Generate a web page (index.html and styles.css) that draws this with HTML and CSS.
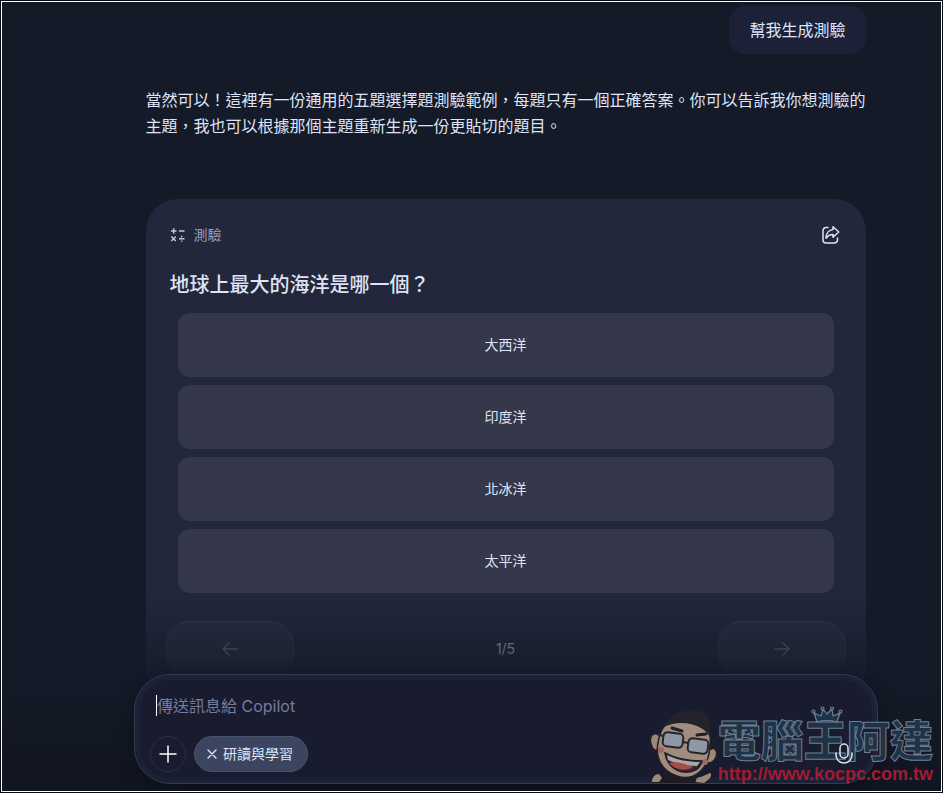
FILE: index.html
```html
<!DOCTYPE html>
<html lang="zh-TW">
<head>
    <meta charset="UTF-8">
    <meta name="viewport" content="width=device-width, initial-scale=1.0">
    <title>Copilot</title>
    <link rel="stylesheet" href="styles.css">
</head>
<body>
    <div class="app">
        <main class="chat">
            <div class="user-message">幫我生成測驗</div>
            <p class="reply">當然可以！這裡有一份通用的五題選擇題測驗範例，每題只有一個正確答案。你可以告訴我你想測驗的主題，我也可以根據那個主題重新生成一份更貼切的題目。</p>

            <section class="quiz">
                <div class="quiz-header">
                    <svg class="quiz-icon" width="16" height="16" viewBox="0 0 16 16" fill="none" stroke="currentColor" stroke-width="1.4">
                        <path d="M1 4h5.500M3.700 1.300v5.400M9 4h5.500M1.300 9.500l4.500 4.500M5.800 9.500l-4.500 4.500M9 11.800h5.500"/>
                        <path d="M11.700 8.800v1.400M11.700 13.400v1.400"/>
                    </svg>
                    <span>測驗</span>
                    <button class="share" type="button" aria-label="分享">
                        <svg width="20" height="20" viewBox="0 0 20 20" fill="none" stroke="currentColor" stroke-width="1.5" stroke-linecap="round" stroke-linejoin="round">
                            <path d="M6 2.500H4a3 3 0 0 0-3 3V15a3 3 0 0 0 3 3h8.500a3 3 0 0 0 3-3v-2"/>
                            <path d="M11 1.800 16.800 7 11 12.200V9.600C8 9.400 6 10.600 4 13.200 4.100 8.600 6.800 5 11 4.600Z"/>
                        </svg>
                    </button>
                </div>
                <h2>地球上最大的海洋是哪一個？</h2>
                <div class="options">
                    <button type="button">大西洋</button>
                    <button type="button">印度洋</button>
                    <button type="button">北冰洋</button>
                    <button type="button">太平洋</button>
                </div>
                <div class="quiz-nav">
                    <button type="button" aria-label="上一題">
                        <svg width="16" height="16" viewBox="0 0 16 16" fill="none" stroke="currentColor" stroke-width="1.4" stroke-linecap="round" stroke-linejoin="round"><path d="M15 8H1M7 2 1 8l6 6"/></svg>
                    </button>
                    <span>1/5</span>
                    <button type="button" aria-label="下一題">
                        <svg width="16" height="16" viewBox="0 0 16 16" fill="none" stroke="currentColor" stroke-width="1.4" stroke-linecap="round" stroke-linejoin="round"><path d="M1 8h14M9 2l6 6-6 6"/></svg>
                    </button>
                </div>
            </section>
        </main>

        <div class="dock">
            <form class="composer">
                <input type="text" class="message" placeholder="傳送訊息給 Copilot" aria-label="傳送訊息給 Copilot">
                <div class="tools">
                    <button class="add" type="button" aria-label="新增">
                        <svg width="18" height="18" viewBox="0 0 18 18" fill="none" stroke="currentColor" stroke-width="1.5" stroke-linecap="round"><path d="M9 1v16M1 9h16"/></svg>
                    </button>
                    <button class="mode" type="button">
                        <svg width="10" height="10" viewBox="0 0 10 10" fill="none" stroke="currentColor" stroke-width="1.4" stroke-linecap="round"><path d="M1 1l8 8M9 1 1 9"/></svg>
                        研讀與學習
                    </button>
                    <button class="mic" type="button" aria-label="語音">
                        <svg width="20" height="22" viewBox="0 0 20 22" fill="none" stroke="currentColor" stroke-width="1.5" stroke-linecap="round"><rect x="6" y="1" width="8" height="14" rx="4"/><path d="M2 10v2a8 8 0 0 0 16 0v-2"/></svg>
                    </button>
                </div>
            </form>
        </div>

        <div class="watermark">
            <svg class="face" width="72" height="82" viewBox="0 0 72 82">
                <path d="M6 81c2-7 6-11 12-12l14 6 20 2-2 4z" fill="#1d1c22"/>
                <path d="M6 80c0-5 3-8 7-8l3 4-3 4zM50 80c-1-3 2-5 5-5l9-4c2 1 1 4-1 6l-5 4z" fill="#9c8878"/>
                <path d="M13 33C7 29 3 35 5 42c1 5 4 7 8 6M63 48c6-4 9 1 7 7-2 5-6 7-10 5" fill="#9c8878" stroke="#221f26" stroke-width="1.5"/>
                <path d="M19 23c12-8 32-9 45 5 1 13 0 27-6 37-6 9-16 13-27 9C16 69 9 56 12 41c1-7 3-13 7-18z" fill="#a08d7e" stroke="#221f26" stroke-width="1.5"/>
                <path d="M18 25c2-5 6-9 10-12 10-6 25-7 32-1 5 5 5 14 4 24-2-5-5-8-9-10-11-6-25-7-37-1z" fill="#24222a"/>
                <path d="m26 26 10 3M51 33l9-1" fill="none" stroke="#221f26" stroke-width="3" stroke-linecap="round"/>
                <g fill="#8f96a6" stroke="#26252e" stroke-width="2">
                    <rect x="17" y="31" width="20" height="14" rx="4" transform="rotate(7 27 38)"/>
                    <rect x="42" y="37" width="20" height="14" rx="4" transform="rotate(7 52 44)"/>
                    <path d="m37 40 5 1M17 34l-6-2M62 46l4 1" fill="none"/>
                </g>
                <circle cx="15" cy="48" r="3" fill="#a5675d"/>
                <circle cx="59" cy="60" r="3" fill="#a5675d"/>
                <path d="M19 51c11 6 24 8 37 8-2 8-9 12-18 11-10-1-18-9-19-19z" fill="#3f242b" stroke="#221f26" stroke-width="1.5"/>
                <path d="M21 53c10 5 21 7 33 7l-3 4c-11 0-20-2-29-6z" fill="#a6a8af"/>
                <path d="M23 61c8-2 17 1 24 4-7 5-18 3-24-4z" fill="#a54d43"/>
            </svg>
            <div class="brand">
                <svg class="crown" width="32" height="18" viewBox="0 0 32 18" fill="#1d3448" stroke="#717d90" stroke-width="1.2">
                    <path d="m6 16-3-9 7 3 2-7 4 5 5-5 1 7 7-3-3 9c-7-2-13-2-20 0z"/>
                    <circle cx="2.500" cy="5.500" r="1.500"/><circle cx="11.500" cy="2.500" r="1.500"/><circle cx="21" cy="2.500" r="1.500"/><circle cx="29.500" cy="5.500" r="1.500"/>
                </svg>
                <div class="brand-name">電腦王阿達</div>
                <div class="brand-url">http://www.kocpc.com.tw</div>
            </div>
        </div>
    </div>
</body>
</html>
```
FILE: styles.css
```css
* {
    box-sizing: border-box;
}
body {
    margin: 0;
    background-color: #0b0c12;
    color: #dfe3f5;
    font-family: Inter, "Noto Sans CJK TC", sans-serif;
    font-size: 16px;
    line-height: 26px;
}
button, input {
    font: inherit;
    color: inherit;
    background: none;
    border: none;
    padding: 0;
}
button {
    cursor: pointer;
    display: flex;
    align-items: center;
    justify-content: center;
}
svg {
    display: block;
    flex: none;
}
.app {
    position: relative;
    height: calc(100vh - 2px);
    margin: 1px;
    padding-left: 68px;
    border: 1px solid #fff;
    background-color: #151a28;
    overflow: hidden;
}
.chat {
    display: flex;
    flex-direction: column;
    max-width: 720px;
    margin: 0 auto;
    padding-top: 4px;
}
.user-message {
    align-self: flex-end;
    padding: 11px 20px;
    border-radius: 16px;
    background-color: #1d2138;
}
.reply {
    margin: 33px 0 60px;
}

/* quiz card */
.quiz {
    padding: 24px 20px;
    border-radius: 32px;
    background-color: #22273b;
}
.quiz-header {
    display: flex;
    align-items: center;
    gap: 8px;
    height: 24px;
    padding: 0 4px;
    color: #9a9fb9;
    font-size: 14px;
}
.quiz-icon {
    color: #c6cae0;
}
.share {
    margin-left: auto;
    color: #dfe3f5;
}
.quiz h2 {
    margin: 25px 4px 15px;
    font-size: 20px;
    font-weight: 500;
    line-height: 26px;
}
.options {
    display: grid;
    gap: 8px;
    padding: 0 12px;
}
.options button {
    height: 64px;
    border-radius: 12px;
    background-color: #34384a;
    font-size: 14px;
}
.quiz-nav {
    display: flex;
    align-items: center;
    justify-content: space-between;
    margin-top: 28px;
    color: #b4b8ca;
    font-size: 14px;
}
.quiz-nav button {
    width: 128px;
    height: 56px;
    border: 1px solid #343950;
    border-radius: 24px;
    background-color: #2a2f43;
    color: #686d82;
}

/* message box over the chat */
.dock {
    position: absolute;
    left: 0;
    right: 0;
    bottom: 0;
    padding: 84px 63px 7px 132px;
    background: linear-gradient(rgba(21, 26, 40, 0), rgba(21, 26, 40, 0.75) 84px, #111521);
}
.composer {
    max-width: 744px;
    margin: 0 auto;
    padding: 20px 16px 11px 15px;
    border: 1px solid #343a50;
    border-radius: 36px;
    background-color: #181c2e;
    box-shadow: inset 0 0 0 5px #1c2138, 0 4px 16px rgba(8, 10, 18, 0.5);
}
.message {
    display: block;
    width: calc(100% - 12px);
    height: 21px;
    margin: 0 6px 20px;
    border-left: 1px solid #fff;
    outline: none;
}
.message::placeholder {
    color: #777b9c;
    opacity: 1;
}
.tools {
    display: flex;
    align-items: center;
    gap: 8px;
}
.add {
    width: 36px;
    height: 36px;
    border: 1px solid #292e41;
    border-radius: 50%;
    color: #fff;
}
.mode {
    gap: 6px;
    height: 36px;
    padding: 0 14px 0 12px;
    border: 1px solid #4b546d;
    border-radius: 18px;
    background-color: #3c455f;
    font-size: 14px;
}
.mic {
    position: relative;
    z-index: 2;
    margin: 0 7px 0 auto;
    color: #dfe3f5;
}

/* site mark in the corner */
.watermark {
    position: absolute;
    right: 8px;
    bottom: 7px;
    z-index: 1;
    display: flex;
    align-items: flex-end;
    pointer-events: none;
}
.brand {
    position: relative;
    font-family: "Liberation Sans", "Noto Sans CJK TC", sans-serif;
    white-space: nowrap;
}
.crown {
    position: absolute;
    left: 93px;
    top: -14px;
}
.brand-name {
    color: #1d3448;
    font-size: 43px;
    font-weight: 900;
    line-height: 44px;
    -webkit-text-stroke: 1px #717d90;
}
.brand-url {
    color: #a01c34;
    font-size: 18px;
    font-weight: bold;
    line-height: 20px;
}
```
